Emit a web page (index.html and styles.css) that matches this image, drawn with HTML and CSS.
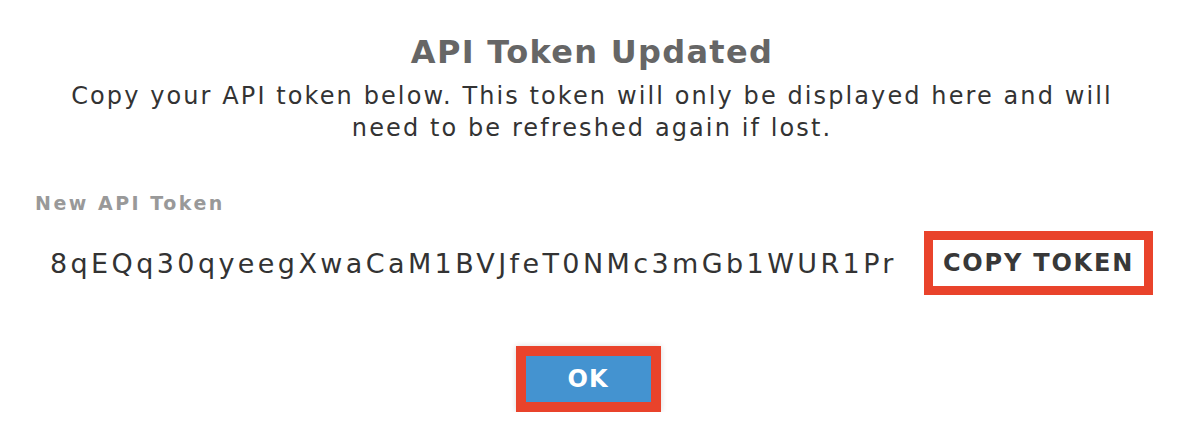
FILE: index.html
```html
<!DOCTYPE html>
<html lang="en">
<head>
    <meta charset="UTF-8">
    <meta name="viewport" content="width=device-width, initial-scale=1.0">
    <title>API Token Updated</title>
    <link rel="stylesheet" href="styles.css">
</head>
<body>
    <div class="modal">
        <h2 class="modal-title">API Token Updated</h2>
        <p class="modal-desc">Copy your API token below. This token will only be displayed here and will need to be refreshed again if lost.</p>

        <!-- token -->
        <div class="token-field">
            <label class="token-label">New API Token</label>
            <div class="token-row">
                <span class="token-value">8qEQq30qyeegXwaCaM1BVJfeT0NMc3mGb1WUR1Pr</span>
                <button class="btn-copy" type="button">COPY TOKEN</button>
            </div>
        </div>

        <div class="modal-actions">
            <button class="btn-ok" type="button">OK</button>
        </div>
    </div>
</body>
</html>
```

FILE: styles.css
```css
body{
  margin: 0;
  background: #fff;
  font-family: "DejaVu Sans", "Open Sans", sans-serif;
}
.modal{
  width: 1184px;
  padding-top: 30px;
}
.modal-title{
  margin: 0;
  text-align: center;
  font-size: 32px;
  font-weight: bold;
  letter-spacing: 1.3px;
  color: #666;
  line-height: 44px;
}
.modal-desc{
  margin: 6px auto 0;
  width: 1090px;
  text-align: center;
  font-size: 24px;
  letter-spacing: 2.1px;
  line-height: 32px;
  color: #333;
}
.token-field{
  margin-top: 46px;
  padding-left: 35px;
}
.token-label{
  display: block;
  font-size: 19px;
  font-weight: bold;
  letter-spacing: 2.5px;
  color: #999;
  line-height: 26px;
}
.token-row{
  display: flex;
  align-items: center;
  margin-top: 15px;
}
.token-value{
  margin-left: 15px;
  width: 874px;
  font-size: 27px;
  letter-spacing: 3.4px;
  color: #333;
  white-space: nowrap;
}
.btn-copy{
  width: 229px;
  height: 64px;
  border: 9px solid #e9432b;
  background: #fff;
  color: #383838;
  font-family: inherit;
  font-size: 24px;
  font-weight: bold;
  letter-spacing: 1.8px;
  padding: 0;
  cursor: pointer;
}
.modal-actions{
  display: flex;
  justify-content: center;
  margin-top: 51px;
  padding-right: 8px;
}
.btn-ok{
  width: 145px;
  height: 66px;
  border: 10px solid #e9432b;
  background: #4493d0;
  color: #fff;
  font-family: inherit;
  font-size: 24px;
  font-weight: bold;
  letter-spacing: 1px;
  padding: 0;
  box-shadow: 0 0 6px rgba(0,0,0,.15);
  cursor: pointer;
}
```
